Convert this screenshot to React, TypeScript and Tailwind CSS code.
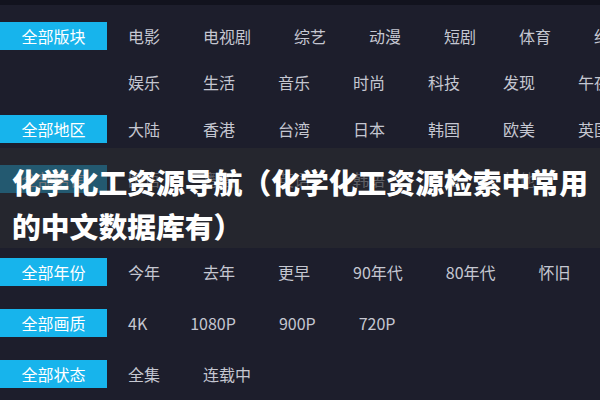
const font = { fontFamily: '"Noto Sans CJK SC", "Noto Sans", sans-serif' };

type Group = { label: string; lines: string[][]; mt: string };

const groups: Group[] = [
  {
    label: "全部版块",
    lines: [
      ["电影", "电视剧", "综艺", "动漫", "短剧", "体育", "纪录"],
      ["娱乐", "生活", "音乐", "时尚", "科技", "发现", "午夜"],
    ],
    mt: "mt-[17px]",
  },
  { label: "全部地区", lines: [["大陆", "香港", "台湾", "日本", "韩国", "欧美", "英国"]], mt: "mt-[19px]" },
  { label: "全部语言", lines: [["国语", "粤语", "英语", "韩语", "日语", "其他"]], mt: "mt-[22px]" },
  { label: "全部年份", lines: [["今年", "去年", "更早", "90年代", "80年代", "怀旧"]], mt: "mt-[65px]" },
  { label: "全部画质", lines: [["4K", "1080P", "900P", "720P"]], mt: "mt-[23px]" },
  { label: "全部状态", lines: [["全集", "连载中"]], mt: "mt-[23px]" },
];

function FilterGroup({ group }: { group: Group }) {
  return (
    <div className={`flex ${group.mt}`}>
      <div className="w-[107px] h-[28px] shrink-0 bg-[#17b4ec] text-white text-base flex items-center justify-center">
        {group.label}
      </div>
      <div className="flex flex-col gap-y-[18px] ml-[21px]">
        {group.lines.map((line, i) => (
          <div key={i} className="flex gap-x-[43px] h-[28px] items-center whitespace-nowrap">
            {line.map((item) => (
              <span key={item} className="text-base text-[#c5c7d1] shrink-0">
                {item}
              </span>
            ))}
          </div>
        ))}
      </div>
    </div>
  );
}

export default function App() {
  return (
    <div className="relative w-[600px] h-[400px] overflow-hidden bg-[#1d1e2c]" style={font}>
      <div className="h-[5px] bg-[#12131e]" />
      <div className="flex flex-col">
        {groups.map((g) => (
          <FilterGroup key={g.label} group={g} />
        ))}
      </div>

      {/* Title overlay */}
      <div className="absolute left-0 right-0 top-[148px] h-[100px] bg-[#2b2b2f]/[0.66] pt-[12px] pl-[12px] pr-[10px]">
        <h1 className="text-white font-black text-[28.8px] leading-[44px] tracking-normal">
          化学化工资源导航（化学化工资源检索中常用的中文数据库有）
        </h1>
      </div>
    </div>
  );
}
